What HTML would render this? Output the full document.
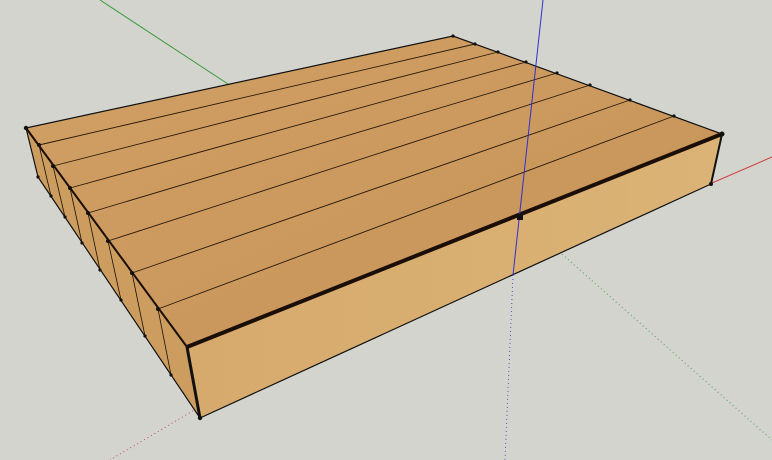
<!DOCTYPE html>
<html><head><style>html,body{margin:0;padding:0;background:#d4d4cf;}svg{display:block}</style></head>
<body>
<svg width="772" height="460" viewBox="0 0 772 460" xmlns="http://www.w3.org/2000/svg">
<defs>
<linearGradient id="top" x1="0" y1="0" x2="1" y2="1">
<stop offset="0" stop-color="#d1a065"/><stop offset="1" stop-color="#c69256"/></linearGradient>
<linearGradient id="front" x1="0" y1="0" x2="1" y2="0">
<stop offset="0" stop-color="#d6aa6c"/><stop offset="1" stop-color="#dbb376"/></linearGradient>
</defs>
<rect width="772" height="460" fill="#d4d4cf"/>
<line x1="100" y1="0" x2="228" y2="84" stroke="#3a9a3a" stroke-width="1"/>
<line x1="520" y1="217" x2="110" y2="460" stroke="#c05050" stroke-width="1" stroke-dasharray="1,3"/>
<line x1="520" y1="217" x2="772" y2="440" stroke="#50a050" stroke-width="1" stroke-dasharray="1,3"/>
<line x1="513" y1="275" x2="505" y2="460" stroke="#5050c0" stroke-width="1" stroke-dasharray="1,3"/>
<line x1="712" y1="183" x2="772" y2="157" stroke="#d04040" stroke-width="1"/>
<polygon points="26,128 187,347 200,418 38,177" fill="#cc9d5f"/>
<g stroke="#1a1208" stroke-width="0.8">
<line x1="39" y1="145" x2="51" y2="196"/><line x1="53" y1="166" x2="65" y2="217"/>
<line x1="70" y1="188" x2="82" y2="243"/><line x1="88" y1="213" x2="100" y2="270"/>
<line x1="108" y1="241" x2="121" y2="300"/><line x1="132" y1="273" x2="145" y2="336"/>
<line x1="158" y1="309" x2="171" y2="375"/>
</g>
<g fill="#111">
<circle cx="51" cy="196" r="1.6"/><circle cx="65" cy="217" r="1.6"/><circle cx="82" cy="243" r="1.6"/><circle cx="100" cy="270" r="1.6"/><circle cx="121" cy="300" r="1.6"/><circle cx="145" cy="336" r="1.6"/><circle cx="171" cy="375" r="1.6"/><circle cx="38" cy="177" r="1.6"/>
</g>
<polygon points="187,347 722,134 711,184 200,418" fill="url(#front)"/>
<polygon points="26,128 453,36 722,134 187,347" fill="url(#top)"/>
<g stroke="#2a1a08" stroke-width="0.9">
<line x1="39" y1="145" x2="475" y2="44"/><line x1="53" y1="166" x2="498" y2="52"/>
<line x1="70" y1="188" x2="526" y2="62"/><line x1="88" y1="213" x2="557" y2="73"/>
<line x1="108" y1="241" x2="590" y2="85"/><line x1="132" y1="273" x2="630" y2="100"/>
<line x1="158" y1="309" x2="674" y2="116"/>
</g>
<polyline points="38,177 26,128 453,36 722,134 711,184 200,418 38,177" fill="none" stroke="#111" stroke-width="1.2"/>
<line x1="187" y1="347" x2="722" y2="134" stroke="#1a0e06" stroke-width="4"/>
<line x1="26" y1="128" x2="187" y2="347" stroke="#1a0e06" stroke-width="2"/>
<line x1="187" y1="347" x2="200" y2="418" stroke="#111" stroke-width="3"/>
<line x1="722" y1="134" x2="711" y2="184" stroke="#111" stroke-width="2"/>
<g fill="#111">
<circle cx="39" cy="145" r="2"/><circle cx="53" cy="166" r="2"/><circle cx="70" cy="188" r="2"/><circle cx="88" cy="213" r="2"/><circle cx="108" cy="241" r="2"/><circle cx="132" cy="273" r="2"/><circle cx="158" cy="309" r="2"/>
<circle cx="475" cy="44" r="1.6"/><circle cx="498" cy="52" r="1.6"/><circle cx="526" cy="62" r="1.6"/><circle cx="557" cy="73" r="1.6"/><circle cx="590" cy="85" r="1.6"/><circle cx="630" cy="100" r="1.6"/><circle cx="674" cy="116" r="1.6"/>
<circle cx="26" cy="128" r="2.2"/><circle cx="722" cy="134" r="2.5"/><circle cx="200" cy="418" r="2.2"/><circle cx="711" cy="184" r="2"/><circle cx="453" cy="36" r="1.6"/>
</g>
<line x1="543" y1="0" x2="513" y2="275" stroke="#3030d0" stroke-width="1"/>
<rect x="517" y="214" width="6" height="6" fill="#111"/>
</svg>
</body></html>
